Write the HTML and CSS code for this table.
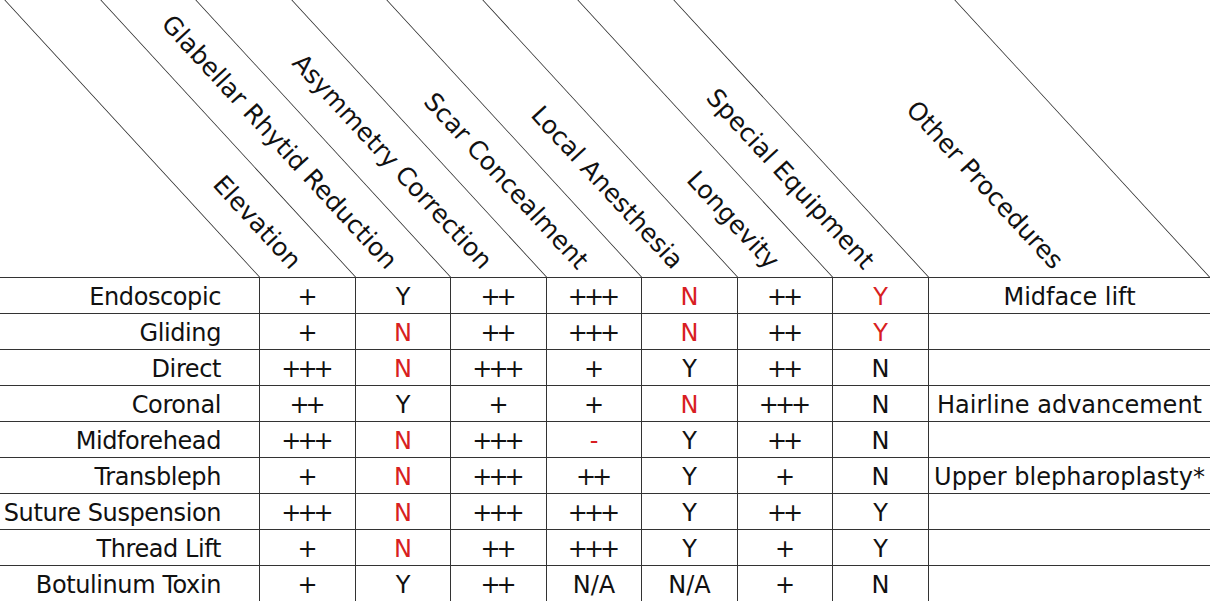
FILE: index.html
```html
<!DOCTYPE html>
<html>
<head>
<meta charset="utf-8">
<title>Brow lift comparison</title>
<link rel="stylesheet" href="styles.css">
</head>
<body>
<div class="sheet">
  <div class="hc hc-blank"></div>
  <div class="hc"><div class="band"></div><span class="hl">Elevation</span></div>
  <div class="hc"><div class="band"></div><span class="hl">Glabellar Rhytid Reduction</span></div>
  <div class="hc"><div class="band"></div><span class="hl">Asymmetry Correction</span></div>
  <div class="hc"><div class="band"></div><span class="hl">Scar Concealment</span></div>
  <div class="hc"><div class="band"></div><span class="hl">Local Anesthesia</span></div>
  <div class="hc"><div class="band"></div><span class="hl">Longevity</span></div>
  <div class="hc"><div class="band"></div><span class="hl">Special Equipment</span></div>
  <div class="hc"><div class="band band-last"></div><span class="hl">Other Procedures</span></div>

  <div class="c lab">Endoscopic</div>
  <div class="c d p">+</div><div class="c d">Y</div><div class="c d p">++</div><div class="c d p">+++</div><div class="c d red">N</div><div class="c d p">++</div><div class="c d red">Y</div><div class="c d">Midface lift</div>

  <div class="c lab">Gliding</div>
  <div class="c d p">+</div><div class="c d red">N</div><div class="c d p">++</div><div class="c d p">+++</div><div class="c d red">N</div><div class="c d p">++</div><div class="c d red">Y</div><div class="c d"></div>

  <div class="c lab">Direct</div>
  <div class="c d p">+++</div><div class="c d red">N</div><div class="c d p">+++</div><div class="c d p">+</div><div class="c d">Y</div><div class="c d p">++</div><div class="c d">N</div><div class="c d"></div>

  <div class="c lab">Coronal</div>
  <div class="c d p">++</div><div class="c d">Y</div><div class="c d p">+</div><div class="c d p">+</div><div class="c d red">N</div><div class="c d p">+++</div><div class="c d">N</div><div class="c d">Hairline advancement</div>

  <div class="c lab">Midforehead</div>
  <div class="c d p">+++</div><div class="c d red">N</div><div class="c d p">+++</div><div class="c d red">-</div><div class="c d">Y</div><div class="c d p">++</div><div class="c d">N</div><div class="c d"></div>

  <div class="c lab">Transbleph</div>
  <div class="c d p">+</div><div class="c d red">N</div><div class="c d p">+++</div><div class="c d p">++</div><div class="c d">Y</div><div class="c d p">+</div><div class="c d">N</div><div class="c d">Upper blepharoplasty*</div>

  <div class="c lab">Suture Suspension</div>
  <div class="c d p">+++</div><div class="c d red">N</div><div class="c d p">+++</div><div class="c d p">+++</div><div class="c d">Y</div><div class="c d p">++</div><div class="c d">Y</div><div class="c d"></div>

  <div class="c lab">Thread Lift</div>
  <div class="c d p">+</div><div class="c d red">N</div><div class="c d p">++</div><div class="c d p">+++</div><div class="c d">Y</div><div class="c d p">+</div><div class="c d">Y</div><div class="c d"></div>

  <div class="c lab">Botulinum Toxin</div>
  <div class="c d p">+</div><div class="c d">Y</div><div class="c d p">++</div><div class="c d">N/A</div><div class="c d">N/A</div><div class="c d p">+</div><div class="c d">N</div><div class="c d"></div>
</div>
</body>
</html>
```
FILE: styles.css
```css
html, body {
  margin: 0;
  padding: 0;
  background: #fff;
}
body {
  width: 1210px;
  height: 601px;
  overflow: hidden;
  font-family: "DejaVu Sans", "Liberation Sans", sans-serif;
  font-size: 24px;
  color: #111;
}
.sheet {
  display: grid;
  grid-template-columns: 259px 96px 95px 96px 95px 96px 95px 96px 1fr;
}
.hc {
  position: relative;
  height: 277px;
}
.band {
  height: 100%;
  box-sizing: border-box;
  border-left: 1px solid #222;
  transform-origin: 0 100%;
  transform: skewX(42.6deg);
}
.band-last {
  border-right: 1px solid #222;
}
.hl {
  position: absolute;
  right: 50%;
  bottom: -15px;
  width: 440px;
  height: 30px;
  line-height: 30px;
  box-sizing: border-box;
  padding-right: 16px;
  font-size: 25px;
  text-align: right;
  white-space: nowrap;
  transform-origin: 100% 50%;
  transform: rotate(47.4deg);
}
.c {
  box-sizing: border-box;
  height: 36px;
  border-top: 1px solid #333;
  padding-top: 4px;
  line-height: 31px;
  white-space: nowrap;
}
.lab {
  text-align: right;
  padding-right: 38px;
  letter-spacing: -0.4px;
}
.d {
  border-left: 1px solid #333;
  text-align: center;
}
.p {
  letter-spacing: -4px;
  text-indent: -4px;
}
.red {
  color: #d81e22;
}
```
